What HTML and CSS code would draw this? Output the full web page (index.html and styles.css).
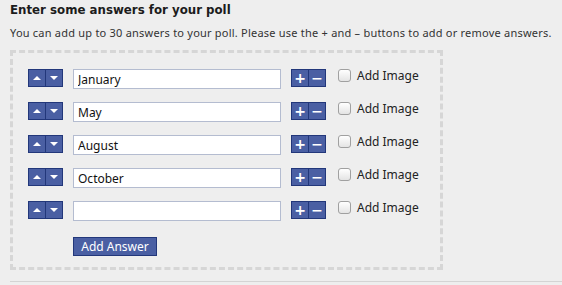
FILE: index.html
```html
<!DOCTYPE html>
<html>
<head>
    <meta charset="UTF-8">
    <title>Poll Answers</title>
    <link rel="stylesheet" href="styles.css">
</head>
<body>
    <div class="poll">
        <h2>Enter some answers for your poll</h2>
        <p class="hint">You can add up to 30 answers to your poll. Please use the + and – buttons to add or remove answers.</p>

        <div class="answers">
            <div class="answer">
                <span class="pair"><button class="btn up"></button><button class="btn down"></button></span>
                <input class="answer-text" type="text" value="January">
                <span class="pair"><button class="btn add">+</button><button class="btn remove">−</button></span>
                <label class="image-opt"><input type="checkbox"><span>Add Image</span></label>
            </div>
            <div class="answer">
                <span class="pair"><button class="btn up"></button><button class="btn down"></button></span>
                <input class="answer-text" type="text" value="May">
                <span class="pair"><button class="btn add">+</button><button class="btn remove">−</button></span>
                <label class="image-opt"><input type="checkbox"><span>Add Image</span></label>
            </div>
            <div class="answer">
                <span class="pair"><button class="btn up"></button><button class="btn down"></button></span>
                <input class="answer-text" type="text" value="August">
                <span class="pair"><button class="btn add">+</button><button class="btn remove">−</button></span>
                <label class="image-opt"><input type="checkbox"><span>Add Image</span></label>
            </div>
            <div class="answer">
                <span class="pair"><button class="btn up"></button><button class="btn down"></button></span>
                <input class="answer-text" type="text" value="October">
                <span class="pair"><button class="btn add">+</button><button class="btn remove">−</button></span>
                <label class="image-opt"><input type="checkbox"><span>Add Image</span></label>
            </div>
            <div class="answer">
                <span class="pair"><button class="btn up"></button><button class="btn down"></button></span>
                <input class="answer-text" type="text" value="">
                <span class="pair"><button class="btn add">+</button><button class="btn remove">−</button></span>
                <label class="image-opt"><input type="checkbox"><span>Add Image</span></label>
            </div>
            <button class="add-answer">Add Answer</button>
        </div>
        <div class="rule"></div>
    </div>
</body>
</html>
```

FILE: styles.css
```css
body {
    margin: 0;
    background-color: #eeeeee;
    font-family: "Noto Sans", "DejaVu Sans", sans-serif;
    color: #333;
}

.poll {
    padding: 2px 0 0 10px;
}

h2 {
    margin: 0;
    font-family: "DejaVu Sans", sans-serif;
    font-size: 11.8px;
    line-height: 16px;
    font-weight: bold;
    color: #1c1c1c;
}

.hint {
    margin: 8px 0 0 0;
    font-size: 11px;
    line-height: 14px;
    letter-spacing: 0.22px;
}

.answers {
    width: 397px;
    margin-top: 10px;
    border: 3px dashed #d6d6d6;
    padding: 16px 15px 11px 15px;
}

.answer {
    display: flex;
    align-items: flex-start;
    margin-bottom: 13px;
}

.pair {
    display: flex;
    border: 1px solid #22377a;
    background-color: #4a5fa3;
}

.btn {
    box-sizing: border-box;
    width: 16px;
    height: 16px;
    margin: 0;
    padding: 0;
    border: 0;
    background-color: #4a5fa3;
    color: #fff;
    font-family: "DejaVu Sans", sans-serif;
    font-weight: bold;
    font-size: 14px;
    line-height: 16px;
    position: relative;
}

.btn + .btn {
    width: 17px;
    border-left: 1px solid #22377a;
}

.up::after,
.down::after {
    content: "";
    position: absolute;
    left: 4px;
    top: 6px;
    border-left: 4px solid transparent;
    border-right: 4px solid transparent;
}

.up::after {
    border-bottom: 4px solid #fff;
}

.down::after {
    border-top: 4px solid #fff;
}

.answer-text {
    width: 208px;
    height: 20px;
    box-sizing: border-box;
    margin: 0 10px 0 10px;
    padding: 0 4px;
    border: 1px solid #b4bcd0;
    background: #fff;
    font-family: "Noto Sans", sans-serif;
    font-size: 12px;
    color: #111;
}

.image-opt {
    display: flex;
    align-items: flex-start;
    margin-left: 12px;
    font-size: 12px;
    line-height: 14px;
    color: #222;
}

.image-opt input {
    appearance: none;
    width: 13px;
    height: 13px;
    margin: 0 6px 0 0;
    border: 1px solid #a0a0a0;
    border-radius: 3px;
    background: linear-gradient(#ffffff, #e4e4e4);
}

.add-answer {
    box-sizing: border-box;
    width: 84px;
    height: 19px;
    margin-left: 45px;
    padding: 0;
    border: 1px solid #22377a;
    background-color: #4a5fa3;
    color: #fff;
    font-family: "Noto Sans", sans-serif;
    font-size: 12px;
    line-height: 17px;
}

.rule {
    margin-top: 11px;
    border-top: 1px solid #d4d4d4;
}
```
